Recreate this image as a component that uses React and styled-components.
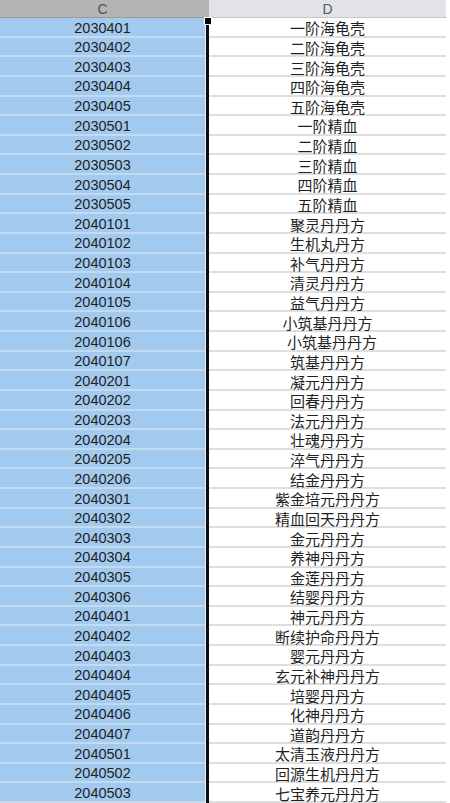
import React from "react";
import styled, { createGlobalStyle } from "styled-components";

// ---------- GLOBAL ----------
const GlobalStyle = createGlobalStyle`
  html, body {
    margin: 0;
    padding: 0;
    background: #fff;
    overflow: hidden;
  }
  body {
    font-family: "Liberation Sans", "Noto Sans CJK SC", sans-serif;
  }
`;

// ---------- STYLED COMPONENTS ----------
const Sheet = styled.div`
  display: flex;
  width: 450px;
  height: 803px;
  overflow: hidden;
  background: #fff;
`;

const Column = styled.div`
  display: flex;
  flex-direction: column;
  width: ${(p) => (p.$width ? `${p.$width}px` : "auto")};
  flex: ${(p) => (p.$width ? "none" : "1")};
`;

const HeaderCell = styled.div`
  box-sizing: border-box;
  height: 18px;
  flex: none;
  display: flex;
  align-items: center;
  justify-content: center;
  font-family: "Liberation Sans", sans-serif;
  font-size: 14px;
  color: ${(p) => (p.$selected ? "#4f4f4f" : "#555a60")};
  background: ${(p) => (p.$selected ? "#b4b4b4" : "#e1e3e6")};
  border-bottom: 1px solid ${(p) => (p.$selected ? "#9a9a9a" : "#c4c6c9")};
`;

const Cell = styled.div`
  box-sizing: border-box;
  height: 19.64px;
  flex: none;
  display: flex;
  align-items: center;
  justify-content: center;
  padding-top: 2px;
  padding-left: ${(p) => p.$indent || 0}px;
  font-size: ${(p) => (p.$cjk ? "15px" : "14.5px")};
  line-height: 1;
  font-family: ${(p) =>
    p.$cjk
      ? `"Noto Sans CJK SC", "Liberation Sans", sans-serif`
      : `"Liberation Sans", sans-serif`};
  color: #1f1f1f;
  background: ${(p) => (p.$selected ? "#a2caef" : "#fff")};
  border-bottom: 2px solid ${(p) => (p.$selected ? "#c3daf1" : "#dedede")};
  white-space: pre;
`;

// the thick border of the selected range
const SelectionEdge = styled.div`
  position: relative;
  width: 4px;
  flex: none;
  display: flex;
  flex-direction: column;
`;

const EdgeHeader = styled.div`
  height: 18px;
  flex: none;
  box-sizing: border-box;
  background: #b4b4b4;
  border-bottom: 1px solid #9a9a9a;
`;

const EdgeLine = styled.div`
  flex: 1;
  background: #fff;
  border-left: 1px solid #e8eef5;
  display: flex;
  &::after {
    content: "";
    width: 3px;
    background: #0d0d0d;
  }
`;

const Handle = styled.div`
  position: absolute;
  top: 18px;
  left: 0;
  width: 6px;
  height: 6px;
  background: #000;
  box-shadow: 0 0 0 1px #fff;
`;

const RightGutter = styled.div`
  width: 4px;
  flex: none;
`;

// ---------- DATA ----------
const rows = [
  ["2030401", "一阶海龟壳"],
  ["2030402", "二阶海龟壳"],
  ["2030403", "三阶海龟壳"],
  ["2030404", "四阶海龟壳"],
  ["2030405", "五阶海龟壳"],
  ["2030501", "一阶精血"],
  ["2030502", "二阶精血"],
  ["2030503", "三阶精血"],
  ["2030504", "四阶精血"],
  ["2030505", "五阶精血"],
  ["2040101", "聚灵丹丹方"],
  ["2040102", "生机丸丹方"],
  ["2040103", "补气丹丹方"],
  ["2040104", "清灵丹丹方"],
  ["2040105", "益气丹丹方"],
  ["2040106", "小筑基丹丹方"],
  ["2040106", "小筑基丹丹方", 9],
  ["2040107", "筑基丹丹方"],
  ["2040201", "凝元丹丹方"],
  ["2040202", "回春丹丹方"],
  ["2040203", "法元丹丹方"],
  ["2040204", "壮魂丹丹方"],
  ["2040205", "淬气丹丹方"],
  ["2040206", "结金丹丹方"],
  ["2040301", "紫金培元丹丹方"],
  ["2040302", "精血回天丹丹方"],
  ["2040303", "金元丹丹方"],
  ["2040304", "养神丹丹方"],
  ["2040305", "金莲丹丹方"],
  ["2040306", "结婴丹丹方"],
  ["2040401", "神元丹丹方"],
  ["2040402", "断续护命丹丹方"],
  ["2040403", "婴元丹丹方"],
  ["2040404", "玄元补神丹丹方"],
  ["2040405", "培婴丹丹方"],
  ["2040406", "化神丹丹方"],
  ["2040407", "道韵丹丹方"],
  ["2040501", "太清玉液丹丹方"],
  ["2040502", "回源生机丹丹方"],
  ["2040503", "七宝养元丹丹方"],
];

// ---------- MAIN COMPONENT ----------
const App = () => {
  return (
    <>
      <GlobalStyle />
      <Sheet>
        <Column $width={205}>
          <HeaderCell $selected>C</HeaderCell>
          {rows.map(([id], i) => (
            <Cell key={i} $selected>
              {id}
            </Cell>
          ))}
        </Column>

        <SelectionEdge>
          <EdgeHeader />
          <EdgeLine />
          <Handle />
        </SelectionEdge>

        <Column>
          <HeaderCell>D</HeaderCell>
          {rows.map(([, name, indent], i) => (
            <Cell key={i} $cjk $indent={indent}>
              {name}
            </Cell>
          ))}
        </Column>
        <RightGutter />
      </Sheet>
    </>
  );
};

export default App;
